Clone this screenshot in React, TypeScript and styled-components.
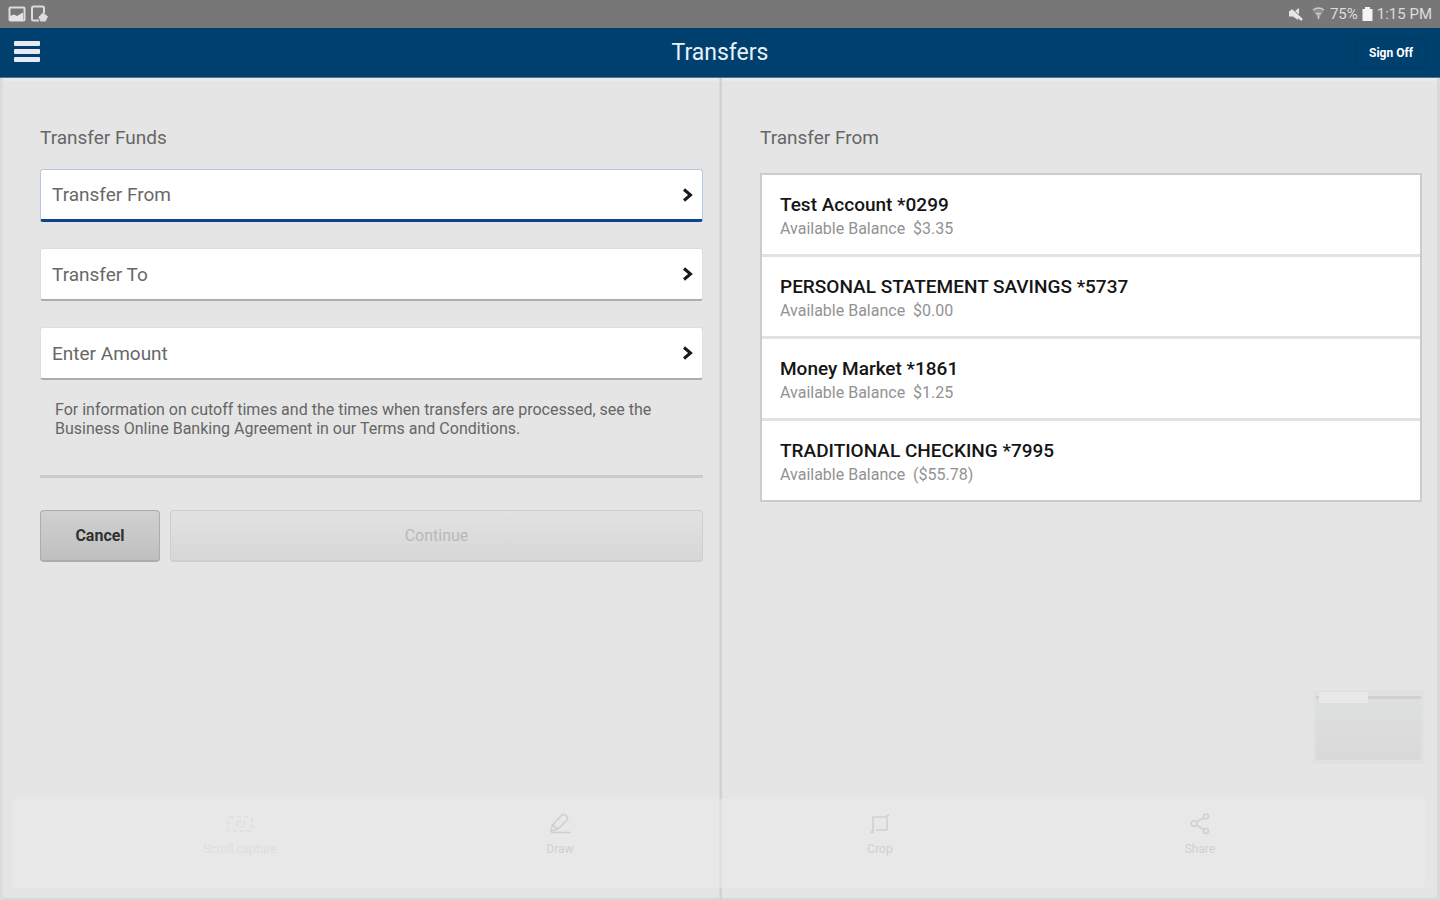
import React from "react";
import styled, { createGlobalStyle } from "styled-components";

const GlobalStyle = createGlobalStyle`
  *, *::before, *::after { box-sizing: border-box; }
  body { margin: 0; background: #e5e5e5; font-family: Roboto, "Liberation Sans", sans-serif; }
  button { font-family: inherit; cursor: pointer; }
  h1, h2, p, ul { margin: 0; padding: 0; font-weight: 400; }
`;

const Page = styled.div`
  position: relative;
  display: flex;
  flex-direction: column;
  min-height: 100vh;
`;

const StatusBar = styled.div`
  display: flex;
  align-items: center;
  justify-content: space-between;
  height: 28px;
  padding: 0 8px;
  background: #777777;
  color: #dcdcdc;
  font-size: 15px;
  line-height: 28px;
`;

const StatusGroup = styled.div<{ $gap: number }>`
  display: flex;
  align-items: center;
  gap: ${(p) => p.$gap}px;
  svg { display: block; }
`;

const Header = styled.header`
  display: grid;
  grid-template-columns: 1fr auto 1fr;
  align-items: center;
  height: 50px;
  padding: 0 14px;
  background: #00406f;
  border-bottom: 1px solid #5f7382;
  color: #e9f0f8;
`;

const MenuButton = styled.button`
  display: flex;
  width: 26px;
  padding: 0;
  border: 0;
  background: transparent;
  svg { display: block; }
`;

const Title = styled.h1`
  font-size: 23px;
  line-height: 48px;
`;

const SignOff = styled.button`
  justify-self: end;
  width: 70px;
  height: 30px;
  padding: 0;
  border: 1px solid #07395f;
  border-radius: 3px;
  background: transparent;
  color: #ffffff;
  font-size: 12px;
  font-weight: 700;
`;

const Panels = styled.main`
  display: grid;
  grid-template-columns: 1fr 1fr;
  flex: 1;
  box-shadow: inset 3px 0 1px #dcdcdc, inset -3px 0 1px #d9d9d9, inset 0 -2px 1px #d6d6d6,
    inset 0 3px 2px #ececec;
`;

const Panel = styled.section`
  padding: 46px 16px 0 40px;
  border-right: 1px solid #dadada;
  & + & {
    padding: 46px 18px 0 38px;
    border-right: 0;
    border-left: 2px solid #d2d2d2;
  }
`;

const Heading = styled.h2<{ $gap: number }>`
  margin-bottom: ${(p) => p.$gap}px;
  color: #666666;
  font-size: 19px;
  line-height: 27px;
`;

const Fields = styled.div`
  display: flex;
  flex-direction: column;
  gap: 26px;
`;

const Field = styled.button<{ $active?: boolean }>`
  display: flex;
  align-items: center;
  justify-content: space-between;
  height: 53px;
  padding: 0 8px 0 11px;
  border: 1px solid ${(p) => (p.$active ? "#b4c9dd" : "#dedede")};
  border-bottom: ${(p) => (p.$active ? "3px solid #0d4490" : "2px solid #adadad")};
  border-radius: 3px;
  background: #ffffff;
  color: #686868;
  font-size: 19px;
`;

const Note = styled.p`
  margin-top: 20px;
  padding: 0 15px;
  color: #666666;
  font-size: 16px;
  line-height: 19px;
`;

const Rule = styled.hr`
  height: 3px;
  margin: 37px 0 32px;
  border: 0;
  background: #cbcbcb;
`;

const Actions = styled.div`
  display: grid;
  grid-template-columns: 120px 1fr;
  gap: 10px;
`;

const ActionButton = styled.button`
  height: 52px;
  border: 1px solid #acacac;
  border-bottom-width: 2px;
  border-radius: 4px;
  background: linear-gradient(#d1d1d1, #bfbfbf);
  color: #303030;
  font-size: 16px;
  font-weight: 700;
  &:disabled {
    border-color: #cecece;
    background: linear-gradient(#e2e2e2, #d7d7d7);
    color: #b8b8b8;
    font-weight: 400;
  }
`;

const AccountList = styled.ul`
  display: grid;
  gap: 3px;
  border: 2px solid #cccccc;
  background: #e2e2e2;
  list-style: none;
`;

const Account = styled.button`
  display: block;
  width: 100%;
  height: 79px;
  padding: 4px 18px 0;
  border: 0;
  background: #ffffff;
  text-align: left;
`;

const AccountName = styled.span`
  display: block;
  color: #151515;
  font-size: 19px;
  font-weight: 500;
  line-height: 24px;
`;

const Balance = styled.span`
  display: block;
  color: #929292;
  font-size: 16px;
  line-height: 24px;
  white-space: pre;
`;

const Preview = styled.div`
  position: absolute;
  right: 16px;
  bottom: 136px;
  width: 111px;
  height: 74px;
  padding: 6px 3px 4px;
  background: #e1e1e1;
`;

const PreviewScreen = styled.div`
  height: 64px;
  border-top: 3px solid #cfd1d2;
  background: linear-gradient(#dedfdf, #d9d9d9);
`;

const PreviewTab = styled.div`
  position: absolute;
  top: 2px;
  left: 6px;
  width: 49px;
  height: 11px;
  background: #e9e9e9;
`;

const CaptureBar = styled.nav`
  position: absolute;
  right: 15px;
  bottom: 12px;
  left: 12px;
  display: grid;
  grid-template-columns: repeat(4, 1fr);
  height: 89px;
  padding: 0 65px 0 68px;
  border-radius: 3px;
  background: rgba(235, 235, 235, 0.5);
`;

const CaptureButton = styled.button<{ $faint?: boolean }>`
  display: flex;
  flex-direction: column;
  align-items: center;
  gap: 6px;
  padding: 13px 0 0;
  border: 0;
  background: transparent;
  color: ${(p) => (p.$faint ? "#dedede" : "#d0d0d0")};
  font-size: 12px;
  line-height: 14px;
`;

const Chevron = () => (
  <svg width="12" height="16" viewBox="0 0 12 16" fill="none" stroke="#181818" strokeWidth="3">
    <path d="M2 2.5 L8.5 8 L2 13.5" />
  </svg>
);

const accounts = [
  { name: "Test Account *0299", balance: "$3.35" },
  { name: "PERSONAL STATEMENT SAVINGS *5737", balance: "$0.00" },
  { name: "Money Market *1861", balance: "$1.25" },
  { name: "TRADITIONAL CHECKING *7995", balance: "($55.78)" },
];

const iconProps = {
  width: 24,
  height: 24,
  viewBox: "0 0 24 24",
  fill: "none",
  stroke: "currentColor",
  strokeWidth: 1.6,
};

const captureTools = [
  {
    label: "Scroll capture",
    faint: true,
    icon: (
      <svg {...iconProps} width="28" viewBox="-2 0 28 24" strokeDasharray="4 3">
        <rect x="0" y="5" width="24" height="14" rx="2" />
        <rect x="9" y="9" width="7" height="6" />
      </svg>
    ),
  },
  {
    label: "Draw",
    icon: (
      <svg {...iconProps}>
        <path d="M3 19 L4.5 13 L14 3 Q16 1.5 18.5 4 Q20.5 6 19 8 L10 17 Z M4.5 13 L10 17" />
        <path d="M3 20.5 H23" />
      </svg>
    ),
  },
  {
    label: "Crop",
    icon: (
      <svg {...iconProps}>
        <path d="M5 21 V5 H17 M8 18 H19 V5" />
        <path d="M17 5 L21 3 M5 18 L3 21" />
      </svg>
    ),
  },
  {
    label: "Share",
    icon: (
      <svg {...iconProps}>
        <circle cx="6" cy="11.500" r="2.800" />
        <circle cx="18" cy="4.500" r="2.500" />
        <circle cx="18" cy="19" r="2.500" />
        <path d="M8.500 10 L15.800 5.700 M8.500 13 L15.800 17.700" />
      </svg>
    ),
  },
];

export default function App() {
  return (
    <Page>
      <GlobalStyle />
      <StatusBar>
        <StatusGroup $gap={5}>
          <svg width="18" height="18" viewBox="0 0 18 18">
            <rect x="1.500" y="2.500" width="15" height="13" rx="1" fill="none" stroke="#dcdcdc" strokeWidth="2" />
            <path d="M2 16 V11 L6 9.500 L9 11 L15 7.500 V16 Z" fill="#e4e4e4" />
          </svg>
          <svg width="18" height="18" viewBox="0 0 18 18">
            <path d="M8 15.500 H2.500 Q1 15.500 1 14 V3 Q1 1.500 2.500 1.500 H11.500 Q13 1.500 13 3 V8" fill="none" stroke="#dcdcdc" strokeWidth="2" />
            <path d="M12 7.500 L17 11.500 L14.500 16.500 H9.500 L7.500 12 Z" fill="#dcdcdc" />
          </svg>
        </StatusGroup>
        <StatusGroup $gap={4}>
          <svg width="38" height="16" viewBox="0 0 38 16">
            <path d="M1 5 H4 L10 11 L10 14 L5 10.500 H1 Z" fill="#e4e4e4" />
            <path d="M7 5 L11 2 V8.500 Z" fill="#e4e4e4" />
            <path d="M3 4 L14 14" stroke="#e8e8e8" strokeWidth="2.400" />
            <path d="M24.500 4 Q30.500 -0.500 36.500 4 L30.500 13.500 Z" fill="#8e8e8e" />
            <path d="M25 4 Q30.500 0 36 4 M28 7.500 H33 M30.500 7 V13" fill="none" stroke="#cccccc" strokeWidth="1.500" />
          </svg>
          <span>75%</span>
          <svg width="11" height="14" viewBox="0 0 11 14">
            <path d="M3 0 H8 V2 H10.500 V14 H0.500 V2 H3 Z" fill="#f4f4f4" />
          </svg>
          <span>1:15 PM</span>
        </StatusGroup>
      </StatusBar>
      <Header>
        <MenuButton aria-label="Menu">
          <svg width="26" height="24" viewBox="0 0 26 24" fill="#e6eaf2">
            <rect x="0" y="0" width="26" height="5" rx="1" />
            <rect x="0" y="8" width="26" height="5" rx="1" />
            <rect x="0" y="16" width="26" height="5" rx="1" />
          </svg>
        </MenuButton>
        <Title>Transfers</Title>
        <SignOff>Sign Off</SignOff>
      </Header>
      <Panels>
        <Panel>
          <Heading $gap={18}>Transfer Funds</Heading>
          <Fields>
            <Field $active>Transfer From<Chevron /></Field>
            <Field>Transfer To<Chevron /></Field>
            <Field>Enter Amount<Chevron /></Field>
          </Fields>
          <Note>
            For information on cutoff times and the times when transfers are processed, see the
            Business Online Banking Agreement in our Terms and Conditions.
          </Note>
          <Rule />
          <Actions>
            <ActionButton>Cancel</ActionButton>
            <ActionButton disabled>Continue</ActionButton>
          </Actions>
        </Panel>
        <Panel>
          <Heading $gap={22}>Transfer From</Heading>
          <AccountList>
            {accounts.map((a) => (
              <li key={a.name}>
                <Account>
                  <AccountName>{a.name}</AccountName>
                  <Balance>{`Available Balance  ${a.balance}`}</Balance>
                </Account>
              </li>
            ))}
          </AccountList>
        </Panel>
      </Panels>
      <Preview>
        <PreviewScreen />
        <PreviewTab />
      </Preview>
      <CaptureBar aria-label="Screenshot tools">
        {captureTools.map((t) => (
          <CaptureButton key={t.label} $faint={t.faint}>
            {t.icon}
            {t.label}
          </CaptureButton>
        ))}
      </CaptureBar>
    </Page>
  );
}
